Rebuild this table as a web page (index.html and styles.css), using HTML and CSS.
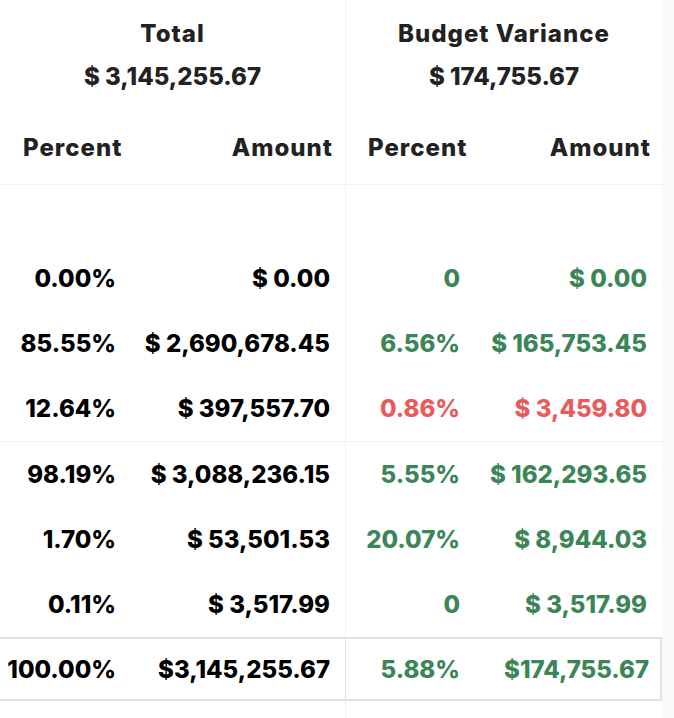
FILE: index.html
```html
<!DOCTYPE html>
<html>
<head>
<meta charset="utf-8">
<link rel="stylesheet" href="styles.css">
</head>
<body>
<div class="sheet">
  <div class="titles">
    <div class="title-cell">
      <div class="title label">Total</div>
      <div class="title">$ 3,145,255.67</div>
    </div>
    <div class="title-cell divider">
      <div class="title label">Budget Variance</div>
      <div class="title">$ 174,755.67</div>
    </div>
  </div>
  <div class="row subhead">
    <div class="cell left label">Percent</div>
    <div class="cell right label">Amount</div>
    <div class="cell left divider pl label">Percent</div>
    <div class="cell right pr label">Amount</div>
  </div>
  <div class="row spacer">
    <div class="cell"></div><div class="cell"></div><div class="cell divider"></div><div class="cell"></div>
  </div>
  <div class="row data">
    <div class="cell num">0.00%</div>
    <div class="cell num">$ 0.00</div>
    <div class="cell num divider good">0</div>
    <div class="cell num good">$ 0.00</div>
  </div>
  <div class="row data">
    <div class="cell num">85.55%</div>
    <div class="cell num">$ 2,690,678.45</div>
    <div class="cell num divider good">6.56%</div>
    <div class="cell num good">$ 165,753.45</div>
  </div>
  <div class="row data sep">
    <div class="cell num">12.64%</div>
    <div class="cell num">$ 397,557.70</div>
    <div class="cell num divider bad">0.86%</div>
    <div class="cell num bad">$ 3,459.80</div>
  </div>
  <div class="row data">
    <div class="cell num">98.19%</div>
    <div class="cell num">$ 3,088,236.15</div>
    <div class="cell num divider good">5.55%</div>
    <div class="cell num good">$ 162,293.65</div>
  </div>
  <div class="row data">
    <div class="cell num">1.70%</div>
    <div class="cell num">$ 53,501.53</div>
    <div class="cell num divider good">20.07%</div>
    <div class="cell num good">$ 8,944.03</div>
  </div>
  <div class="row data">
    <div class="cell num">0.11%</div>
    <div class="cell num">$ 3,517.99</div>
    <div class="cell num divider good">0</div>
    <div class="cell num good">$ 3,517.99</div>
  </div>
  <div class="row total">
    <div class="cell num">100.00%</div>
    <div class="cell num">$3,145,255.67</div>
    <div class="cell num divider good">5.88%</div>
    <div class="cell num good">$174,755.67</div>
  </div>
  <div class="row filler">
    <div class="cell"></div><div class="cell"></div><div class="cell divider"></div><div class="cell"></div>
  </div>
</div>
</body>
</html>
```

FILE: styles.css
```css
* { box-sizing: border-box; }
html, body { margin: 0; padding: 0; }
body {
  background: #f9f9f9;
  font-family: Inter, "Noto Sans", "Liberation Sans", sans-serif;
  font-weight: 800;
  font-size: 24px;
  color: #000;
}
.sheet {
  width: 662px;
  min-height: 718px;
  background: #fff;
  display: flex;
  flex-direction: column;
}
.titles {
  display: grid;
  grid-template-columns: 345px 317px;
  height: 100px;
}
.title-cell {
  padding-top: 12px;
  text-align: center;
  color: #222;
}
.title { line-height: 43px; }
.label { letter-spacing: 1px; }
.divider { border-left: 1px solid #f1f1f1; }
.row {
  display: grid;
  grid-template-columns: 131px 214px 130px 187px;
}
.cell {
  display: flex;
  align-items: center;
  white-space: nowrap;
}
.subhead {
  height: 85px;
  border-bottom: 1px solid #f1f1f1;
  color: #222;
}
.subhead .cell { padding-top: 10px; }
.subhead .left { justify-content: flex-start; padding-left: 23px; }
.subhead .right { justify-content: flex-end; padding-right: 12px; }
.subhead .pl { padding-left: 22px; }
.subhead .pr { padding-right: 11px; }
.spacer { height: 61px; }
.data { height: 65px; }
.num { justify-content: flex-end; padding-right: 15px; }
.sep { height: 66px; border-bottom: 1px solid #f1f1f1; }
.good { color: #3b8557; }
.bad { color: #e85b5b; }
.total {
  height: 64px;
  border-top: 2px solid #e2e2e2;
  border-bottom: 2px solid #e2e2e2;
  border-right: 2px solid #e2e2e2;
}
.total .divider { border-left-color: #e2e2e2; }
.total .cell:last-child { padding-right: 13px; }
.filler { flex: 1; }
```
